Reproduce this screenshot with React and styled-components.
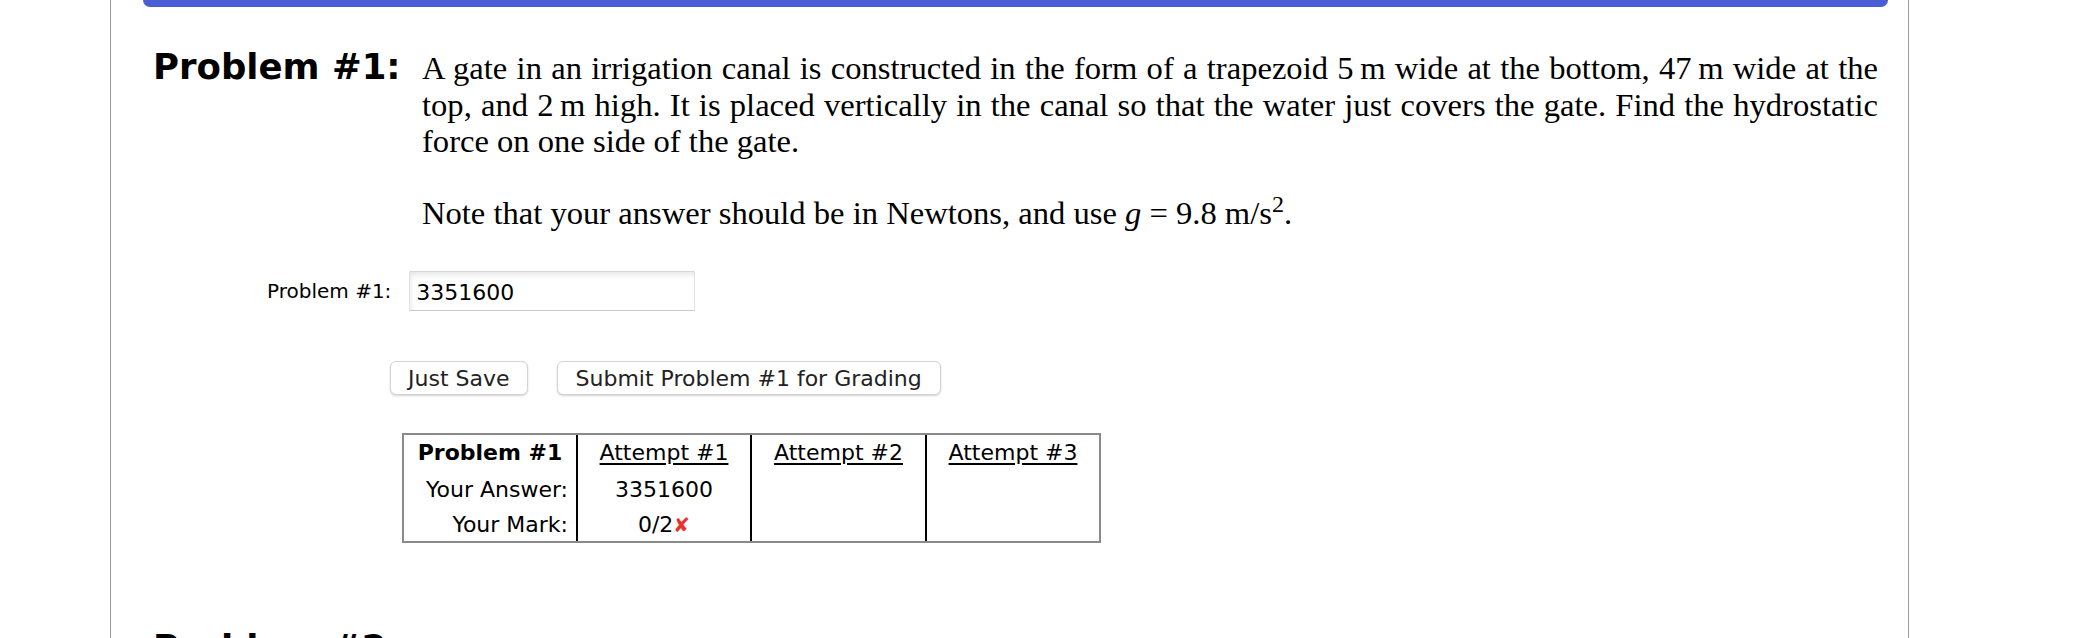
import React from "react";
import styled, { createGlobalStyle } from "styled-components";

const GlobalStyle = createGlobalStyle`
  html, body { margin: 0; padding: 0; background: #ffffff; }
  body { color: #000; }
`;

const Page = styled.div`
  padding-left: 110px;
  width: 2076px;
  box-sizing: border-box;
`;

const Sheet = styled.div`
  width: 1799px;
  box-sizing: border-box;
  border-left: 1px solid #9a9a9a;
  border-right: 1px solid #9a9a9a;
  min-height: 700px;
`;

const TopBar = styled.div`
  height: 7px;
  margin: 0 20px 0 32px;
  background: #4a5dd4;
  border-radius: 0 0 14px 14px;
`;

const ProblemBlock = styled.section`
  display: flex;
  align-items: baseline;
  padding: ${(p) => p.$top}px 30px 0 42px;
`;

const Heading = styled.h2`
  flex: none;
  width: 269px;
  margin: 0;
  font-family: "DejaVu Sans", Verdana, sans-serif;
  font-weight: bold;
  font-size: 35.5px;
  white-space: nowrap;
`;

const Statement = styled.div`
  flex: 1;
  font-family: "Liberation Serif", "Times New Roman", serif;
  font-size: 32.6px;
  line-height: 36.6px;
  text-align: justify;
`;

const Para = styled.p`
  margin: 0 0 ${(p) => p.$mb || 0}px;
`;

const Var = styled.i`
  font-style: italic;
`;

const Sup = styled.sup`
  font-size: 0.74em;
  line-height: 0;
`;

const AnswerRow = styled.div`
  display: flex;
  align-items: center;
  gap: 18px;
  margin: 40px 0 0 156px;
`;

const Label = styled.label`
  font-family: "DejaVu Sans", Verdana, sans-serif;
  font-size: 20px;
`;

const AnswerInput = styled.input`
  width: 286px;
  height: 40px;
  box-sizing: border-box;
  padding: 2px 6px 0;
  font-family: "DejaVu Sans", Verdana, sans-serif;
  font-size: 22px;
  color: #000;
  border: 1px solid #e2e2e2;
  border-top-color: #d6d6d6;
  border-bottom-color: #c8c8c8;
  box-shadow: inset 2px 4px 6px -2px rgba(0, 0, 0, 0.12);
  outline: none;
  background: #fff;
`;

const ButtonRow = styled.div`
  display: flex;
  gap: 29px;
  margin: 50px 0 0 279px;
`;

const Button = styled.button`
  height: 34px;
  padding: 0 ${(p) => p.$pad}px;
  font-family: "DejaVu Sans", Verdana, sans-serif;
  font-size: 22px;
  color: #222;
  background: #fff;
  border: 1px solid #d4d4d4;
  border-radius: 6px;
  box-shadow: 0 1px 2px rgba(0, 0, 0, 0.18);
`;

const Table = styled.table`
  margin: 38px 0 0 291px;
  border: 2px solid #8a8a8a;
  border-spacing: 0;
  font-family: "DejaVu Sans", Verdana, sans-serif;
  font-size: 22px;
`;

const Row = styled.tr`
  height: ${(p) => p.$h}px;
`;

const Cell = styled.td`
  box-sizing: border-box;
  padding: 0 8px;
  line-height: 27px;
  width: ${(p) => p.$w}px;
  text-align: ${(p) => p.$align || "center"};
  vertical-align: middle;
  font-weight: ${(p) => (p.$bold ? "bold" : "normal")};
  border-left: ${(p) => (p.$first ? "none" : "2px solid #000")};
`;

const AttemptLink = styled.a`
  color: #000;
  text-decoration: underline;
  text-underline-offset: 3px;
`;

const Cross = styled.span`
  color: #e8352b;
  font-weight: bold;
  font-size: 20px;
`;

export default function App() {
  const thin = "\u2009";
  return (
    <>
      <GlobalStyle />
      <Page>
        <Sheet>
          <TopBar />
          <ProblemBlock $top={39}>
            <Heading>Problem #1:</Heading>
            <Statement>
              <Para $mb={35}>
                A gate in an irrigation canal is constructed in the form of a trapezoid 5{thin}m wide at
                the bottom, 47{thin}m wide at the top, and 2{thin}m high. It is placed vertically in the
                canal so that the water just covers the gate. Find the hydrostatic force on one side of
                the gate.
              </Para>
              <Para>
                Note that your answer should be in Newtons, and use <Var>g</Var> = 9.8 m/s<Sup>2</Sup>.
              </Para>
            </Statement>
          </ProblemBlock>

          <AnswerRow>
            <Label htmlFor="ans1">Problem #1:</Label>
            <AnswerInput id="ans1" defaultValue="3351600" />
          </AnswerRow>

          <ButtonRow>
            <Button $pad={17}>Just Save</Button>
            <Button $pad={18}>Submit Problem #1 for Grading</Button>
          </ButtonRow>

          <Table>
            <tbody>
              <Row $h={35}>
                <Cell $first $bold $w={172}>Problem #1</Cell>
                <Cell $w={174}><AttemptLink href="#a1">Attempt #1</AttemptLink></Cell>
                <Cell $w={175}><AttemptLink href="#a2">Attempt #2</AttemptLink></Cell>
                <Cell $w={174}><AttemptLink href="#a3">Attempt #3</AttemptLink></Cell>
              </Row>
              <Row $h={38}>
                <Cell $first $align="right">Your Answer:</Cell>
                <Cell>3351600</Cell>
                <Cell />
                <Cell />
              </Row>
              <Row $h={33}>
                <Cell $first $align="right">Your Mark:</Cell>
                <Cell>0/2<Cross>✘</Cross></Cell>
                <Cell />
                <Cell />
              </Row>
            </tbody>
          </Table>

          <ProblemBlock $top={84}>
            <Heading>Problem #2:</Heading>
            <Statement>
              <Para>&nbsp;</Para>
            </Statement>
          </ProblemBlock>
        </Sheet>
      </Page>
    </>
  );
}
